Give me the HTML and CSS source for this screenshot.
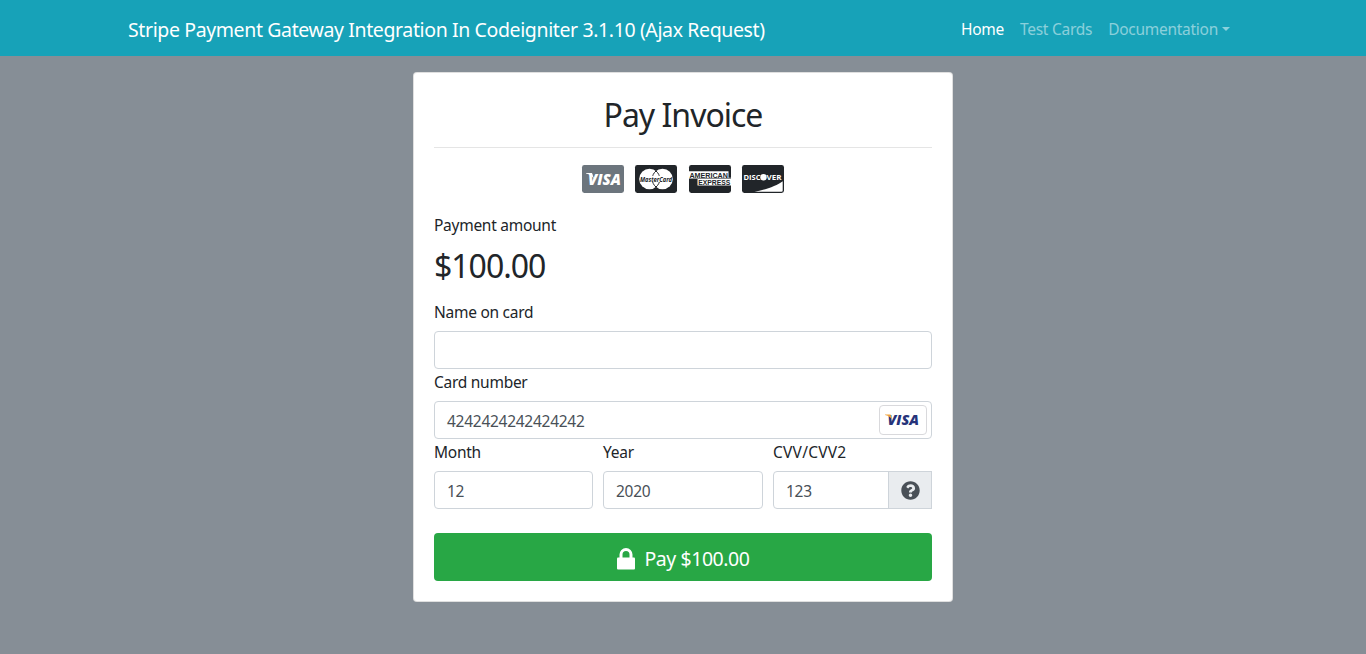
FILE: index.html
```html
<!DOCTYPE html>
<html lang="en">
<head>
<meta charset="utf-8">
<title>Pay Invoice</title>
<link rel="stylesheet" href="styles.css">
</head>
<body>
<nav class="navbar">
  <div class="container">
    <a class="brand">Stripe Payment Gateway Integration In Codeigniter 3.1.10 (Ajax Request)</a>
    <ul class="nav">
      <li class="active">Home</li>
      <li class="cards-link">Test Cards</li>
      <li class="dropdown">Documentation</li>
    </ul>
  </div>
</nav>
<main class="card">
  <h2 class="title"><span>Pay Invoice</span></h2>
  <hr>
  <div class="brands">
    <svg class="muted" viewBox="0 0 42 28"><rect width="42" height="28" rx="2.4" fill="currentColor"/><text x="6" y="19.500" class="logo visa" textLength="33" lengthAdjust="spacingAndGlyphs">VISA</text><path d="M4 8h6l2 6c-2-3-4-4.700-8-5.500z" fill="#fff"/></svg>
    <svg viewBox="0 0 42 28"><rect width="42" height="28" rx="2.4" fill="currentColor"/><circle cx="14.5" cy="14" r="10.3" fill="#fff"/><circle cx="27.5" cy="14" r="10.3" fill="#fff"/><path d="M21 6a10.3 10.3 0 0 0 0 16a10.3 10.3 0 0 0 0-16z" fill="#fff" stroke="currentColor" stroke-width="1"/><path d="M5 10.800h32v6.200H5z" fill="#fff"/><text x="5" y="16.600" class="logo master" textLength="32" lengthAdjust="spacingAndGlyphs">MasterCard</text></svg>
    <svg viewBox="0 0 42 28"><rect width="42" height="28" rx="2.4" fill="currentColor"/><path d="M0 6.300h39.500v6.500H42v7.800H8.500v-7.200H0z" fill="#fff"/><text x=".4" y="12.600" class="logo amex" textLength="38.5" lengthAdjust="spacingAndGlyphs">AMERICAN</text><path d="M8.500 13.400H42" stroke="currentColor" stroke-width=".6"/><text x="9.3" y="20.200" class="logo amex" textLength="32" lengthAdjust="spacingAndGlyphs">EXPRESS</text></svg>
    <svg viewBox="0 0 42 28"><rect width="42" height="28" rx="2.4" fill="currentColor"/><path d="M12.500 26.800C25 24.400 35 20.400 40.700 16.200v9.300q0 1.300-1.300 1.300z" fill="#fff"/><text x="1.500" y="15" class="logo discover" textLength="17" lengthAdjust="spacingAndGlyphs">DISC</text><circle cx="21.500" cy="12.300" r="3.200" fill="#fff"/><text x="24.500" y="15" class="logo discover" textLength="15" lengthAdjust="spacingAndGlyphs">VER</text></svg>
  </div>
  <div class="label">Payment amount</div>
  <div class="amount">$100.00</div>
  <label class="label">Name on card</label>
  <div class="field"></div>
  <label class="label">Card number</label>
  <div class="field number"><span>4242424242424242</span>
    <div class="card-type"><svg viewBox="0 0 36 12"><text x="2.500" y="11" class="logo visa-blue" textLength="31.5" lengthAdjust="spacingAndGlyphs">VISA</text><path d="M0 .6h5.500l2 5.600C6 3.500 3.800 1.800 0 1z" fill="#f2a33a"/></svg></div>
  </div>
  <div class="row">
    <div><label class="label">Month</label><div class="field"><span>12</span></div></div>
    <div><label class="label">Year</label><div class="field"><span>2020</span></div></div>
    <div><label class="label cvv">CVV/CVV2</label>
      <div class="group"><div class="field"><span>123</span></div><div class="help"><svg viewBox="0 0 512 512"><path fill="currentColor" d="M504 256c0 136.997-111.043 248-248 248S8 392.997 8 256C8 119.083 119.043 8 256 8s248 111.083 248 248zM262.655 90c-54.497 0-89.255 22.957-116.549 63.758-3.536 5.286-2.353 12.415 2.715 16.258l34.699 26.31c5.205 3.947 12.621 3.008 16.665-2.122 17.864-22.658 30.113-35.797 57.303-35.797 20.429 0 45.698 13.148 45.698 32.958 0 14.976-12.363 22.667-32.534 33.976C247.128 238.528 216 254.941 216 296v4c0 6.627 5.373 12 12 12h56c6.627 0 12-5.373 12-12v-1.333c0-28.462 83.186-29.647 83.186-106.667 0-58.002-60.165-102-116.531-102zM256 338c-25.365 0-46 20.635-46 46 0 25.364 20.635 46 46 46s46-20.636 46-46c0-25.364-20.635-46-46-46z"/></svg></div></div>
    </div>
  </div>
  <button class="pay"><svg viewBox="0 0 18 22"><path d="M4 10V6.500a5 5 0 0 1 10 0V10" fill="none" stroke="#fff" stroke-width="3"/><rect y="9.500" width="18" height="12" rx="1" fill="#fff"/></svg><span>Pay $100.00</span></button>
</main>
</body>
</html>
```
FILE: styles.css
```css
* { box-sizing: border-box; }
body { margin: 0; min-height: 654px; background: #868e96; color: #212529; font: 400 15.500px/24px "Noto Sans", sans-serif; letter-spacing: -.27px; overflow: hidden; }
.navbar { height: 56px; background: #17a2b8; color: #fff; }
.container { width: 1110px; margin: 0 auto; height: 56px; display: flex; justify-content: space-between; align-items: center; padding: 3px 8px 0 0; }
.brand { font-size: 19.500px; line-height: 30px; letter-spacing: -.38px; white-space: nowrap; }
.nav { display: flex; gap: 16px; list-style: none; margin: 0; padding: 0 0 2px; white-space: nowrap; color: rgba(255,255,255,.5); }
.nav .active { color: #fff; }
.dropdown::after { content: ""; display: inline-block; margin-left: 4px; vertical-align: 4px; border-top: 4.800px solid; border-left: 4.800px solid transparent; border-right: 4.800px solid transparent; }
.card { width: 540px; height: 530px; margin: 16px auto 0; padding: 20px; background: #fff; border: 1px solid rgba(0,0,0,.125); border-radius: 4px; }
.title { margin: 0; padding-top: 3px; height: 54px; font-size: 32px; font-weight: 400; line-height: 38px; letter-spacing: -1px; text-align: center; }
hr { margin: 0; border: 0; border-top: 1px solid rgba(0,0,0,.1); }
.brands { display: flex; justify-content: center; gap: 11.600px; padding-top: 17.400px; height: 64px; }
.brands svg { width: 42px; height: 28px; color: #212529; overflow: visible; }
.brands .muted { color: #6c757d; }
.logo { font-family: "Open Sans", sans-serif; font-weight: 700; font-style: italic; letter-spacing: 0; }
.visa { font-size: 15.500px; fill: #fff; font-weight: 800; }
.master { font-size: 7px; fill: #212529; }
.amex { font-family: "Liberation Sans", sans-serif; font-style: normal; font-size: 7.600px; fill: #212529; }
.discover { font-style: normal; font-size: 7.500px; fill: #fff; }
.visa-blue { font-size: 14px; fill: #26337a; font-weight: 800; }
.label { display: block; height: 32px; padding-top: 1px; white-space: nowrap; }
.cvv { letter-spacing: .25px; }
.amount { height: 55px; padding-top: 3px; font-size: 32px; line-height: 38px; letter-spacing: -1px; }
.field { height: 38px; border: 1px solid #ced4da; border-radius: 4px; padding: 7px 12px; color: #495057; background: #fff; }
.number { display: flex; justify-content: space-between; padding-right: 4px; }
.card-type { width: 48px; height: 30px; margin-top: -4px; border: 1px solid #d9d9dc; border-radius: 4px; display: flex; align-items: center; justify-content: center; }
.card-type svg { width: 36px; height: 12px; overflow: visible; }
.row { display: grid; grid-template-columns: 159px 160px 159px; gap: 10px; }
.group { display: flex; }
.group .field { width: 116px; border-radius: 4px 0 0 4px; }
.help { width: 44px; margin-left: -1px; height: 38px; border: 1px solid #ced4da; background: #e9ecef; color: #495057; display: flex; align-items: center; justify-content: center; }
.help svg { width: 19px; height: 19px; }
.pay { width: 100%; height: 48px; margin-top: 24px; border: 0; border-radius: 4px; background: #28a745; color: #fff; display: flex; align-items: center; justify-content: center; gap: 10px; padding: 3px 0 0; font: 19.500px/30px "Noto Sans", sans-serif; letter-spacing: -.45px; }
.pay svg { width: 18px; height: 22px; }
```
